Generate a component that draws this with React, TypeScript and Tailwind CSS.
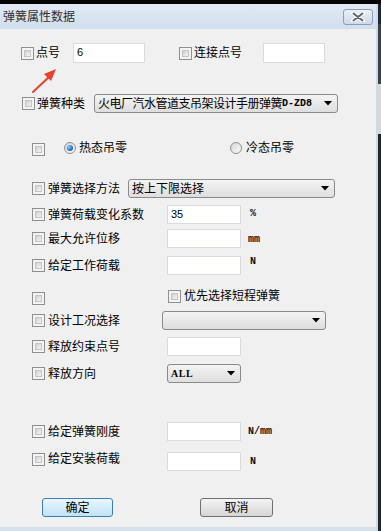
import React from "react";

function CheckBox() {
  return (
    <span className="inline-flex w-[13px] h-[13px] shrink-0 border border-[#8e8f8f] bg-[#f4f4f4] p-[2px]">
      <span className="w-full h-full bg-gradient-to-br from-[#cfd0d1] to-[#f6f6f6] border border-[#c3c4c5]" />
    </span>
  );
}

function Radio({ checked }: { checked?: boolean }) {
  return (
    <span className="inline-flex items-center justify-center w-[12px] h-[12px] shrink-0 rounded-full border border-[#8e8f8f] bg-gradient-to-br from-[#d6d6d6] to-[#fbfbfb]">
      {checked && (
        <span className="w-[6px] h-[6px] rounded-full bg-[radial-gradient(circle_at_35%_35%,#8fd3ff,#1a6fbf_60%,#0d4a8a)]" />
      )}
    </span>
  );
}

function CheckLabel({ label, className }: { label: string; className?: string }) {
  return (
    <div className={`flex items-center gap-[3px] shrink-0 ${className ?? ""}`}>
      <CheckBox />
      <span className="text-[12px] leading-[14px] text-black whitespace-nowrap">{label}</span>
    </div>
  );
}

function TextBox({ value, className }: { value?: string; className?: string }) {
  return (
    <div
      className={`h-[19px] shrink-0 bg-white border border-[#d8dce2] pl-[3px] pt-[2px] text-[11px] leading-[12px] font-['Liberation_Sans',sans-serif] text-black ${className ?? ""}`}
    >
      {value}
    </div>
  );
}

function Caret() {
  return (
    <svg width="8" height="5" viewBox="0 0 8 5" className="shrink-0">
      <path d="M0 0 H8 L4 4.5 Z" fill="#000" />
    </svg>
  );
}

function Select({ children, className }: { children?: React.ReactNode; className?: string }) {
  return (
    <div
      className={`h-[19px] shrink-0 flex items-center justify-between rounded-[3px] border border-[#8a8a8a] bg-gradient-to-b from-[#f4f4f4] to-[#dedede] pl-[3px] pr-[5px] ${className ?? ""}`}
    >
      <span className="flex items-center text-[12px] leading-[14px] text-black whitespace-nowrap overflow-hidden">
        {children}
      </span>
      <Caret />
    </div>
  );
}

function Unit({ text, className }: { text: string; className?: string }) {
  return (
    <span
      className={`ml-[7px] text-[10px] leading-[10px] font-bold font-['Liberation_Mono',monospace] text-[#111] ${className ?? ""}`}
    >
      {text}
    </span>
  );
}

export default function App() {
  return (
    <div className="w-[381px] h-[531px] flex flex-col bg-[#1c2830] font-['Liberation_Sans','Noto_Sans_CJK_SC',sans-serif] overflow-hidden">
      <div className="h-[4px] bg-[#050505] shrink-0" />
      <div className="flex flex-1 min-h-0">
        <div className="relative w-[378px] flex flex-col border-r-[2px] border-[#cddaea]">
          {/* title bar */}
          <div className="h-[25px] shrink-0 flex items-center justify-between pl-[3px] pr-[3px] bg-gradient-to-b from-[#e1eaf5] to-[#d2deed]">
            <span className="text-[12px] leading-[14px] text-[#2f2f2f]">弹簧属性数据</span>
            <div className="w-[30px] h-[16px] flex items-center justify-center rounded-[3px] border border-[#8c9db4] bg-gradient-to-b from-[#e9f0f8] to-[#cfdae8]">
              <svg width="14" height="10" viewBox="0 0 14 10">
                <path d="M2 1 L12 9 M12 1 L2 9" stroke="#ffffff" strokeWidth="4" strokeLinecap="round" />
                <path d="M2.5 1.5 L11.5 8.5 M11.5 1.5 L2.5 8.5" stroke="#5f6670" strokeWidth="2" strokeLinecap="round" />
              </svg>
            </div>
          </div>

          {/* content */}
          <div className="flex-1 flex flex-col bg-[#f0f0f0] border-b-[4px] border-[#d4e0ee]">
            {/* row 1 */}
            <div className="flex items-center h-[20px] mt-[14px] pl-[21px]">
              <div className="flex items-center gap-[2px] w-[52px] shrink-0">
                <CheckBox />
                <span className="text-[12px] leading-[14px]">点号</span>
              </div>
              <TextBox value="6" className="w-[72px] h-[20px]" />
              <div className="flex items-center gap-[2px] ml-[34px] w-[84px] shrink-0">
                <CheckBox />
                <span className="text-[12px] leading-[14px]">连接点号</span>
              </div>
              <TextBox className="w-[62px] h-[20px]" />
            </div>

            {/* row 2 */}
            <div className="flex items-center h-[19px] mt-[31px] pl-[22px]">
              <div className="flex items-center gap-[2px] w-[72px] shrink-0">
                <CheckBox />
                <span className="text-[12px] leading-[14px]">弹簧种类</span>
              </div>
              <Select className="w-[244px]">
                <span className="tracking-[-0.5px]">火电厂汽水管道支吊架设计手册弹簧</span>
                <span className="font-['Liberation_Mono',monospace] text-[10px] font-bold">D-ZD8</span>
              </Select>
            </div>

            {/* row 3 */}
            <div className="flex items-center h-[20px] mt-[25px] pl-[32px]">
              <div className="w-[32px] shrink-0">
                <CheckBox />
              </div>
              <div className="flex items-center gap-[3px] w-[166px] shrink-0">
                <Radio checked />
                <span className="text-[12px] leading-[14px]">热态吊零</span>
              </div>
              <div className="flex items-center gap-[4px]">
                <Radio />
                <span className="text-[12px] leading-[14px]">冷态吊零</span>
              </div>
            </div>

            {/* row 4 */}
            <div className="flex items-center h-[19px] mt-[21px] pl-[32px]">
              <CheckLabel label="弹簧选择方法" className="w-[96px]" />
              <Select className="w-[207px]">按上下限选择</Select>
            </div>

            {/* row 5 */}
            <div className="flex items-center h-[19px] mt-[7px] pl-[32px]">
              <CheckLabel label="弹簧荷载变化系数" className="w-[135px]" />
              <TextBox value="35" className="w-[74px]" />
              <Unit text="%" className="ml-[9px] mb-[2px]" />
            </div>

            {/* row 6 */}
            <div className="flex items-center h-[19px] mt-[5px] pl-[32px]">
              <CheckLabel label="最大允许位移" className="w-[135px]" />
              <TextBox className="w-[74px]" />
              <Unit text="mm" className="mt-[3px]" />
            </div>

            {/* row 7 */}
            <div className="flex items-center h-[19px] mt-[8px] pl-[32px]">
              <CheckLabel label="给定工作荷载" className="w-[135px]" />
              <TextBox className="w-[74px]" />
              <Unit text="N" className="ml-[9px] mb-[7px]" />
            </div>

            {/* row 8 */}
            <div className="flex items-center h-[14px] mt-[14px] pl-[32px]">
              <div className="w-[136px] shrink-0 pt-[2px]">
                <CheckBox />
              </div>
              <CheckLabel label="优先选择短程弹簧" />
            </div>

            {/* row 9 */}
            <div className="flex items-center h-[19px] mt-[8px] pl-[32px]">
              <CheckLabel label="设计工况选择" className="w-[130px]" />
              <Select className="w-[164px]" />
            </div>

            {/* row 10 */}
            <div className="flex items-center h-[19px] mt-[7px] pl-[32px]">
              <CheckLabel label="释放约束点号" className="w-[135px]" />
              <TextBox className="w-[74px]" />
            </div>

            {/* row 11 */}
            <div className="flex items-center h-[19px] mt-[8px] pl-[32px]">
              <CheckLabel label="释放方向" className="w-[135px]" />
              <Select className="w-[74px]">
                <span className="font-['Liberation_Serif',serif] text-[10px] font-bold tracking-[0.5px]">ALL</span>
              </Select>
            </div>

            {/* row 12 */}
            <div className="flex items-center h-[19px] mt-[39px] pl-[32px]">
              <CheckLabel label="给定弹簧刚度" className="w-[135px]" />
              <TextBox className="w-[74px]" />
              <Unit text="N/mm" />
            </div>

            {/* row 13 */}
            <div className="flex items-center h-[19px] mt-[11px] pl-[32px]">
              <div className="w-[135px] shrink-0 self-start">
                <CheckLabel label="给定安装荷载" />
              </div>
              <TextBox className="w-[74px]" />
              <Unit text="N" className="ml-[9px]" />
            </div>

            {/* buttons */}
            <div className="flex items-center h-[19px] mt-[27px] pl-[42px]">
              <button className="w-[71px] h-[19px] rounded-[3px] border border-[#3c7fb1] bg-gradient-to-b from-[#eaf6fd] to-[#bfe3f8] text-[12px] leading-[14px] text-black">
                确定
              </button>
              <button className="ml-[87px] w-[73px] h-[19px] rounded-[3px] border border-[#707070] bg-gradient-to-b from-[#f4f4f4] to-[#d6d6d6] text-[12px] leading-[14px] text-black">
                取消
              </button>
            </div>
          </div>

          {/* red annotation arrow */}
          <svg className="absolute left-[30px] top-[60px]" width="30" height="32" viewBox="0 0 30 32">
            <path d="M3 28 L21 11" stroke="#e8412c" strokeWidth="2" strokeLinecap="round" />
            <path d="M26 5 L14 10 L21 17 Z" fill="#e8412c" />
          </svg>
        </div>

        {/* background strip to the right */}
        <div className="flex-1 flex flex-col">
          <div className="h-[20px] bg-[#1c2830]" />
          <div className="h-[60px] bg-[#3a4148]" />
          <div className="h-[50px] bg-[#d8d8d8]" />
          <div className="flex-1 bg-[#1c2830]" />
        </div>
      </div>
    </div>
  );
}
